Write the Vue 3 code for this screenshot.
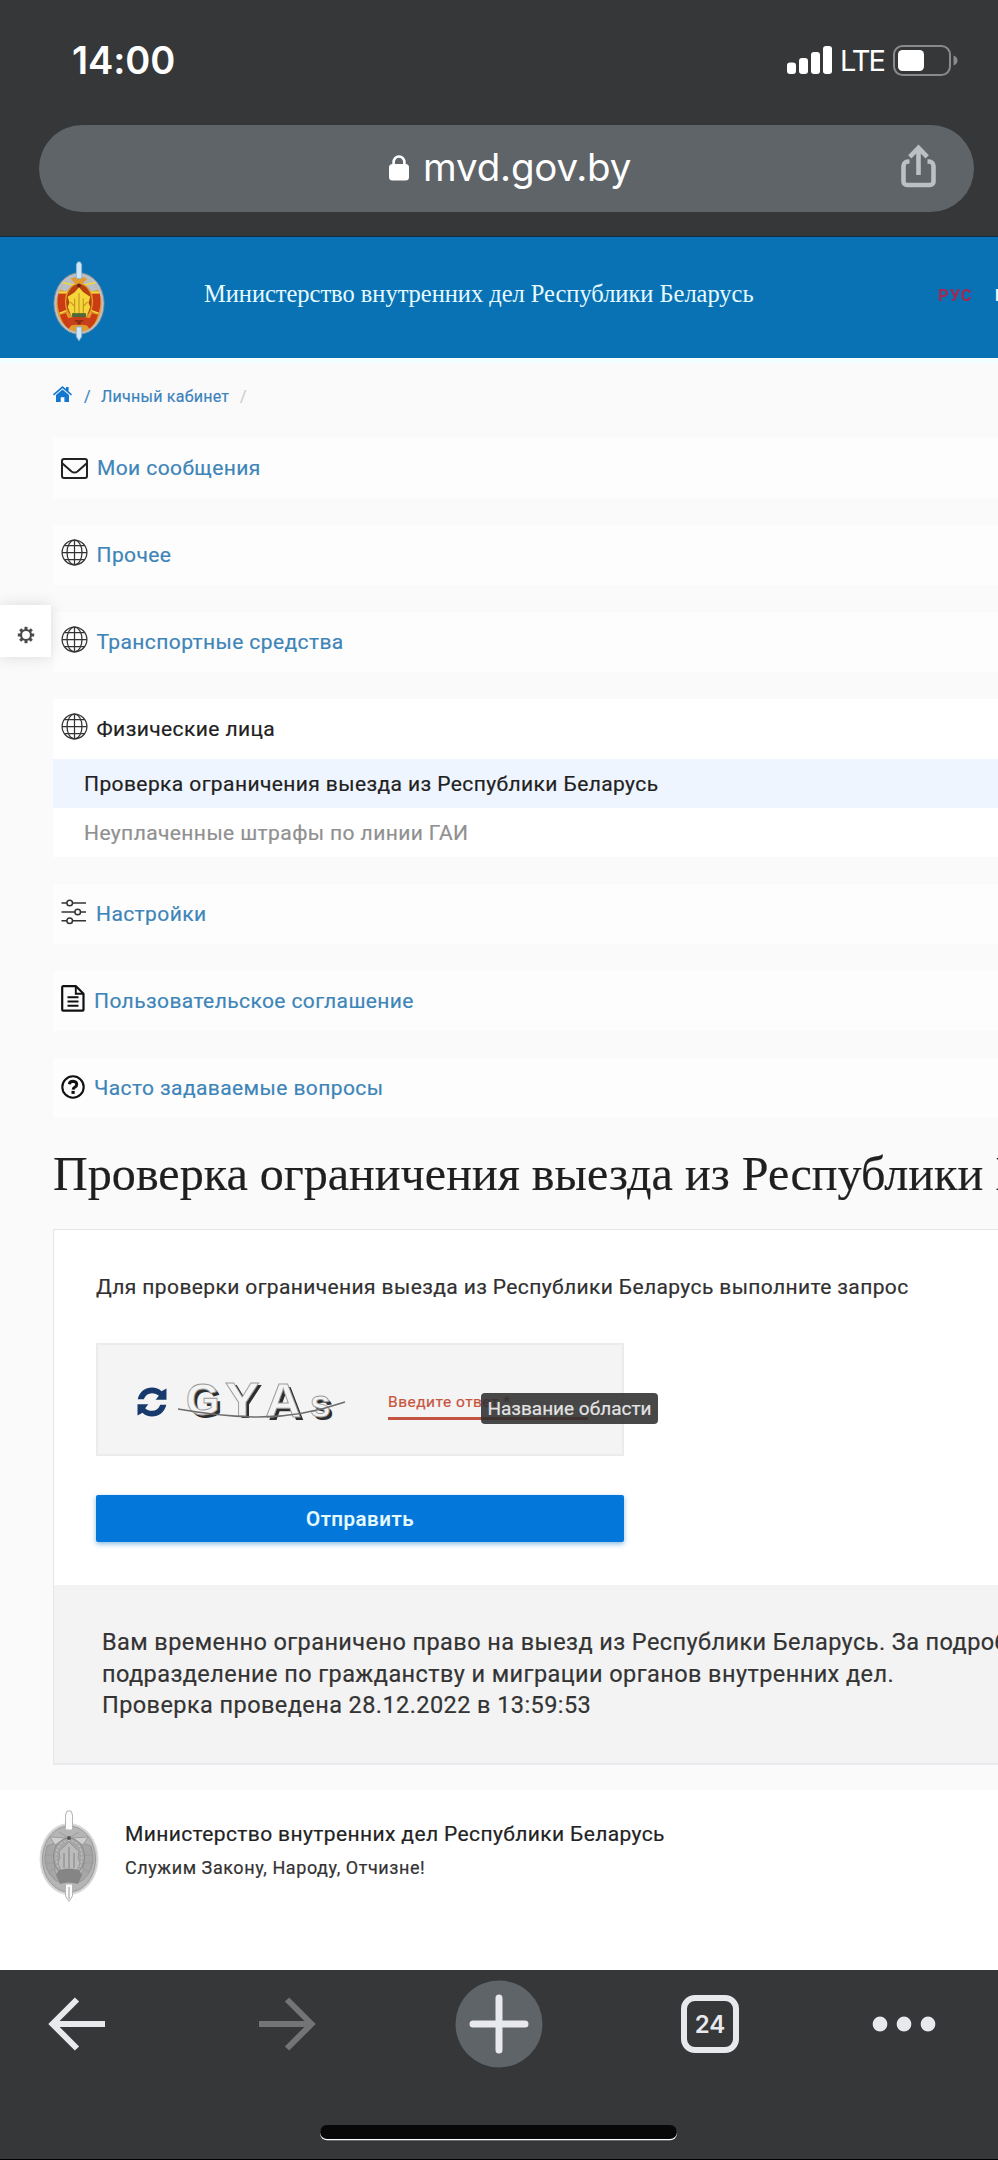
<script setup>
const menuTop = [
  { icon: 'mail', label: 'Мои сообщения' },
  { icon: 'globe', label: 'Прочее' },
  { icon: 'globe', label: 'Транспортные средства' },
  {
    icon: 'globe',
    label: 'Физические лица',
    open: true,
    children: [
      { label: 'Проверка ограничения выезда из Республики Беларусь', active: true },
      { label: 'Неуплаченные штрафы по линии ГАИ' },
    ],
  },
  { icon: 'sliders', label: 'Настройки' },
  { icon: 'doc', label: 'Пользовательское соглашение' },
  { icon: 'help', label: 'Часто задаваемые вопросы' },
]
const gearTeeth = [0, 45, 90, 135, 180, 225, 270, 315]
const emblems = {
  color: { rim: '#b9bfc4', edge: '#7c858c', red: '#cc3c12', gold: '#e39a2e', core: '#b8420f', wheat: '#f4d53a', dark: '#4f6a3a', ribbon: '#c8401c', sword: '#cfe6f7', swordEdge: '#8fb6d3' },
  gray: { rim: '#cfcfcf', edge: '#9a9a9a', red: '#a6a6a6', gold: '#b5b5b5', core: '#a6a6a6', wheat: '#bcbcbc', dark: '#858585', ribbon: '#858585', sword: '#fbfbfb', swordEdge: '#b5b5b5' },
}
</script>

<template>
  <div class="page">
    <header class="chrome-top">
      <div class="status">
        <span class="time">14:00</span>
        <div class="status-right">
          <svg class="signal" width="45" height="28" viewBox="0 0 45 28">
            <rect x="0" y="16.500" width="9" height="11.500" rx="3" fill="#fff" />
            <rect x="12" y="12" width="9" height="16" rx="3" fill="#fff" />
            <rect x="24" y="6" width="9" height="22" rx="3" fill="#fff" />
            <rect x="36" y="0" width="9" height="28" rx="3" fill="#fff" />
          </svg>
          <span class="lte">LTE</span>
          <svg class="battery" width="65" height="31" viewBox="0 0 65 31">
            <rect x="1" y="1" width="56" height="29" rx="8.500" fill="none" stroke="#8a8a8c" stroke-width="2" />
            <rect x="5" y="5" width="26" height="21" rx="4.500" fill="#fff" />
            <path d="M60.500 10.500c3 1 4 2.800 4 5s-1 4-4 5z" fill="#8a8a8c" />
          </svg>
        </div>
      </div>
      <div class="urlbar">
        <svg class="lock" width="20" height="26" viewBox="0 0 20 26">
          <rect x="0" y="9" width="20" height="16.500" rx="3.500" fill="#fff" />
          <path d="M4.600 11V7.300a5.400 5.800 0 0 1 10.800 0V11" fill="none" stroke="#fff" stroke-width="2.600" />
        </svg>
        <span class="url">mvd.gov.by</span>
        <svg class="share" width="36" height="44" viewBox="0 0 36 44">
          <path d="M8.500 17.500H7a4.500 4.500 0 0 0-4.500 4.500v15.500A3.500 3.500 0 0 0 6 41h23a3.500 3.500 0 0 0 3.500-3.500V22a4.500 4.500 0 0 0-4.500-4.500h-1.500" fill="none" stroke="#bcc0c4" stroke-width="4.600" />
          <path d="M17.500 31V4M8.800 12.800L17.500 3.800l8.700 9" fill="none" stroke="#bcc0c4" stroke-width="4.600" />
        </svg>
      </div>
    </header>

    <div class="site-head">
      <svg class="emblem" width="52" height="80" viewBox="0 0 60 92">
        <ellipse cx="30" cy="49" rx="29" ry="35.500" :fill="emblems.color.rim" :stroke="emblems.color.edge" />
        <ellipse cx="30" cy="50" rx="26" ry="32" :fill="emblems.color.gold" />
        <path d="M6 38h10l-1 10 1 11H7Q4 48 6 38zM54 38H44l1 10-1 11h9q3-11 1-21z" :fill="emblems.color.red" />
        <path d="M8 62l7-2 6 14-3 4q-7-5-10-16zM52 62l-7-2-6 14 3 4q7-5 10-16z" :fill="emblems.color.red" />
        <path d="M8 33q4-9 12-13l6 6-10 9zM52 33q-4-9-12-13l-6 6 10 9z" :fill="emblems.color.rim" />
        <path d="M11 25l17 3M49 25l-17 3M7 36h10M53 36H43M8 60l8-3M52 60l-8-3" fill="none" :stroke="emblems.color.wheat" stroke-width="1.800" />
        <ellipse cx="30" cy="47" rx="15.500" ry="21" :fill="emblems.color.core" :stroke="emblems.color.gold" stroke-width="1.500" />
        <path d="M30 30l5 6 8 5-2 7 2 5-4 10H21l-4-10 2-5-2-7 8-5z" :fill="emblems.color.wheat" />
        <path d="M25 60V43M30 60V37M35 60V43M20 47l5 5M40 47l-5 5" fill="none" stroke="#c99a1e" stroke-width="1.400" />
        <path d="M22 60h16v4.500H22z" :fill="emblems.color.dark" />
        <path d="M16 66q14-3 28 0l-1 9q-13-3-26 0z" :fill="emblems.color.ribbon" />
        <path d="M25 69h4v4M31 73v-4h4" fill="none" stroke="#7c2810" stroke-width="1.500" />
        <path d="M27 20V4l1.500-3h3L33 4v16zM27 76h6v11l-3 5-3-5z" :fill="emblems.color.sword" :stroke="emblems.color.swordEdge" />
        <circle cx="30" cy="28" r="2.200" fill="#6b2410" />
      </svg>
      <span class="site-title">Министерство внутренних дел Республики Беларусь</span>
      <span class="lang">РУС</span>
      <span class="lang-next">БЕЛ</span>
    </div>

    <main class="content">
      <nav class="crumbs">
        <svg class="home" width="19" height="16" viewBox="0 0 19 16">
          <path d="M0 8.300L9.500 0l3.500 3V1h2.600v4.200L19 8.300l-1 1.300-8.500-7.300L1 9.600z" fill="#1377cf" />
          <path d="M3 9l6.500-5.600L16 9v7h-4.600v-4.700H7.700V16H3z" fill="#1377cf" />
        </svg>
        <span class="slash">/</span>
        <span class="crumb">Личный кабинет</span>
        <span class="slash pale">/</span>
      </nav>

      <div class="menu">
        <section v-for="(item, i) in menuTop" :key="i" class="card" :class="{ open: item.open }">
          <div class="card-row" :class="item.icon">
            <svg v-if="item.icon === 'mail'" class="ico" width="27" height="21" viewBox="0 0 27 21">
              <rect x="1" y="1" width="25" height="19" rx="2" fill="none" stroke="#222" stroke-width="2" />
              <path d="M1.500 5.500L10.500 13.500q3 2.200 6 0l9-8" fill="none" stroke="#222" stroke-width="2" />
            </svg>
            <svg v-else-if="item.icon === 'globe'" class="ico" width="27" height="27" viewBox="0 0 27 27">
              <g fill="none" stroke="#333" stroke-width="1.250">
                <circle cx="13.500" cy="13.500" r="12.400" />
                <ellipse cx="13.500" cy="13.500" rx="7.500" ry="12.400" />
                <path d="M1 13.500h25M3.500 6.500h20M3.500 20.500h20M13.500 1v25" />
              </g>
            </svg>
            <svg v-else-if="item.icon === 'sliders'" class="ico" width="26" height="26" viewBox="0 0 26 26">
              <g fill="none" stroke="#333" stroke-width="1.500">
                <path d="M.500 4H6M11.500 4H25M.500 13H14M19.500 13H25M.500 21.800H6M11.500 21.800H25" />
                <circle cx="8.700" cy="4" r="2.800" /><circle cx="16.700" cy="13" r="2.800" /><circle cx="8.700" cy="21.800" r="2.800" />
              </g>
            </svg>
            <svg v-else-if="item.icon === 'doc'" class="ico" width="24" height="27" viewBox="0 0 24 27">
              <path d="M1.200 2.200a1 1 0 0 1 1-1H15l7.500 7.500v16a1 1 0 0 1-1 1H2.200a1 1 0 0 1-1-1z" fill="none" stroke="#111" stroke-width="2.200" stroke-linejoin="round" />
              <path d="M14.800 1.500v7.300h7.500M6.500 12.200H17.500M6.500 16.500H17.500M6.500 20.800H17.500" fill="none" stroke="#111" stroke-width="1.900" />
            </svg>
            <svg v-else class="ico" width="24" height="24" viewBox="0 0 24 24">
              <circle cx="12" cy="12" r="10.700" fill="none" stroke="#111" stroke-width="2.100" />
              <path d="M8.300 9.200Q8.800 6.300 12 6.300q3.700.2 3.700 3.100 0 1.500-1.700 2.600-1.800 1-1.900 2.600" fill="none" stroke="#111" stroke-width="3" />
              <rect x="10.500" y="15.900" width="3.200" height="3" fill="#111" />
            </svg>
            <span class="label">{{ item.label }}</span>
          </div>
          <div v-for="c in item.children || []" :key="c.label" class="sub" :class="{ active: c.active }">{{ c.label }}</div>
        </section>
      </div>

      <h1 class="heading">Проверка ограничения выезда из Республики Беларусь</h1>

      <section class="panel">
        <div class="panel-form">
          <p class="intro">Для проверки ограничения выезда из Республики Беларусь выполните запрос</p>
          <div class="captcha">
            <svg class="refresh" width="30" height="30" viewBox="0 0 30 30">
              <g fill="#17396b">
                <path d="M.700 12.200C2.500 4.800 8 .5 15 .5c4 0 7 1.200 9.500 3.700L29.500 1.500v11.300H18.700l3.100-4C20 7 17.700 6.200 15 6.200c-4 0-6.700 2-8.200 6z" />
                <path d="M29.300 17.800C27.500 25.200 22 29.500 15 29.500c-4 0-7-1.200-9.500-3.700L.500 28.500V17.200H11.300l-3.100 4C10 23 12.300 23.800 15 23.800c4 0 6.700-2 8.200-6z" />
              </g>
            </svg>
            <svg class="code" width="180" height="52" viewBox="0 0 180 52">
              <g class="code-shade">
                <text x="13" y="43" font-size="45" textLength="34" lengthAdjust="spacingAndGlyphs">G</text>
                <text x="52" y="43" font-size="49" textLength="35" lengthAdjust="spacingAndGlyphs">Y</text>
                <text x="92" y="45" font-size="48" textLength="37" lengthAdjust="spacingAndGlyphs">A</text>
                <text x="137" y="45" font-size="39" textLength="21" lengthAdjust="spacingAndGlyphs">s</text>
              </g>
              <g class="code-line">
                <text x="10" y="40" font-size="45" textLength="34" lengthAdjust="spacingAndGlyphs">G</text>
                <text x="49" y="41" font-size="49" textLength="35" lengthAdjust="spacingAndGlyphs">Y</text>
                <text x="89" y="42" font-size="48" textLength="37" lengthAdjust="spacingAndGlyphs">A</text>
                <text x="134" y="42" font-size="39" textLength="21" lengthAdjust="spacingAndGlyphs">s</text>
              </g>
              <path d="M2 34q40 7 75 8 46 1 92-15" fill="none" stroke="#6d6d6d" stroke-width="1.600" />
            </svg>
            <div class="answer">Введите ответ *</div>
            <div class="tooltip">Название области</div>
          </div>
          <button class="submit">Отправить</button>
        </div>
        <div class="result">
          <div>Вам временно ограничено право на выезд из Республики Беларусь. За подробной</div>
          <div>подразделение по гражданству и миграции органов внутренних дел.</div>
          <div>Проверка проведена 28.12.2022 в 13:59:53</div>
        </div>
      </section>

      <aside class="gear-tab">
        <svg width="18" height="18" viewBox="-9 -9 18 18">
          <circle r="5" fill="none" stroke="#4a4a4a" stroke-width="2.200" />
          <rect v-for="a in gearTeeth" :key="a" x="-1.500" y="-8.200" width="3" height="3" fill="#4a4a4a" :transform="`rotate(${a})`" />
        </svg>
      </aside>
    </main>

    <footer class="site-foot">
      <svg class="emblem-foot" width="60" height="92" viewBox="0 0 60 92">
        <ellipse cx="30" cy="49" rx="29" ry="35.500" :fill="emblems.gray.rim" stroke="#dedede" />
        <ellipse cx="30" cy="49" rx="26.500" ry="33" :fill="emblems.gray.gold" :stroke="emblems.gray.edge" />
        <path d="M8 36l8-3 2 8-3 8 1 12 6 12-6-3Q5 60 6 46zM52 36l-8-3-2 8 3 8-1 12-6 12 6-3Q55 60 54 46z" :fill="emblems.gray.red" stroke="#8f8f8f" stroke-width=".8" />
        <path d="M11 27l16 1-11 7zM49 27l-16 1 11 7zM7 45h8M6 53h9M53 45h-8M54 53h-9M9 62l8-4M51 62l-8-4M20 22l8 5M40 22l-8 5" :fill="emblems.gray.rim" :stroke="emblems.gray.edge" stroke-width=".9" />
        <ellipse cx="30" cy="47" rx="15.500" ry="19" :fill="emblems.gray.core" stroke="#8a8a8a" />
        <ellipse cx="30" cy="47" rx="13" ry="16.500" fill="none" stroke="#c4c4c4" stroke-width="1.200" stroke-dasharray="2 2" />
        <path d="M30 32l5 5 5 4-1 7 2 5-3 8H22l-3-8 2-5-1-7 5-4z" :fill="emblems.gray.wheat" stroke="#929292" stroke-width=".8" />
        <path d="M25 58V43M30 58V37M35 58V43" fill="none" stroke="#8e8e8e" stroke-width="1.300" />
        <path d="M20 60q10-3 20 0l3 5-4 9q-9-3-18 0l-4-9z" :fill="emblems.gray.ribbon" />
        <path d="M26.500 20V5l1.500-4h4l1.500 4v15zM26.500 74h7v12L30 91.500 26.500 86z" :fill="emblems.gray.sword" :stroke="emblems.gray.swordEdge" />
        <path d="M30 77v12" :stroke="emblems.gray.edge" />
        <circle cx="30" cy="28" r="2" fill="#555" />
      </svg>
      <div class="foot-text">
        <div class="foot-name">Министерство внутренних дел Республики Беларусь</div>
        <div class="foot-motto">Служим Закону, Народу, Отчизне!</div>
      </div>
    </footer>

    <div class="toolbar">
      <div class="tools">
        <svg width="58" height="54" viewBox="0 0 58 54">
          <path d="M57 27H5M29 2.500L4.500 27 29 51.500" fill="none" stroke="#e8e9ed" stroke-width="6" />
        </svg>
        <svg width="58" height="54" viewBox="0 0 58 54">
          <path d="M1 27H53M29 2.500L53.500 27 29 51.500" fill="none" stroke="#737475" stroke-width="6" />
        </svg>
        <svg width="88" height="88" viewBox="0 0 88 88">
          <circle cx="44" cy="44" r="43.500" fill="#5f6468" />
          <path d="M44 18v52M18 44h52" fill="none" stroke="#e8e9ed" stroke-width="7" stroke-linecap="round" />
        </svg>
        <div class="tabs">24</div>
        <svg width="64" height="16" viewBox="0 0 64 16">
          <circle cx="8" cy="8" r="7.400" fill="#e8e9ed" /><circle cx="32" cy="8" r="7.400" fill="#e8e9ed" /><circle cx="56" cy="8" r="7.400" fill="#e8e9ed" />
        </svg>
      </div>
      <div class="home-bar"></div>
    </div>
  </div>
</template>

<style>
body { margin: 0; }
</style>
<style scoped>
.page { width: 998px; height: 2160px; overflow: hidden; background: #fafafa; font-family: Roboto, "Liberation Sans", sans-serif; color: #212121; letter-spacing: .4px; white-space: nowrap; }
.page svg { display: block; flex: none; }
.chrome-top { height: 237px; background: #363739; box-sizing: border-box; border-bottom: 1px solid #0c2c4a; font-family: Inter, sans-serif; color: #fff; letter-spacing: 0; }
.status { height: 120px; display: flex; align-items: center; justify-content: space-between; padding: 0 40px 0 72px; box-sizing: border-box; }
.time { font-size: 38px; font-weight: 600; letter-spacing: -.1px; }
.status-right { display: flex; align-items: center; }
.lte { font-size: 29px; letter-spacing: -1.900px; margin-left: 8px; width: 53px; }
.urlbar { margin: 5px 24px 0 39px; height: 87px; border-radius: 44px; background: #5f6468; display: flex; align-items: center; box-sizing: border-box; padding: 0 37px 0 350px; }
.lock { margin-top: -2px; }
.url { font-size: 38.500px; letter-spacing: -.2px; margin-left: 14px; margin-top: -3px; }
.share { margin-left: auto; margin-top: -6px; }

.site-head { height: 121px; background: #0872b4; display: flex; align-items: center; padding-left: 53px; position: relative; box-shadow: 0 5px 0 #f3ffff; }
.emblem { margin-top: 7px; }
.site-title { font: 24.500px "Liberation Serif", serif; letter-spacing: -.03px; color: #e6faff; margin: 0 0 8px 99px; width: 734px; flex: none; }
.lang { font-size: 16.500px; font-weight: 700; letter-spacing: 1px; color: #a52850; margin-bottom: 5px; width: 57px; filter: blur(.5px); flex: none; }
.lang-next { font-size: 17px; font-weight: 700; color: #fff; margin-bottom: 5px; }

.content { position: relative; height: 1432px; display: flex; flex-direction: column; }
.content, .site-foot { -webkit-text-stroke: .2px currentColor; }
.crumbs { height: 77px; margin-bottom: 3px; padding-left: 53px; display: flex; align-items: center; color: #3a83bd; font-size: 16px; letter-spacing: .25px; }
.slash { margin-left: 12px; width: 17px; }
.crumb { width: 127px; }
.slash.pale { margin-left: 12px; color: #ccc; }
.home { margin-top: -5px; }

.menu { display: flex; flex-direction: column; gap: 27px; margin-left: 53px; }
.card { background: #fdfdfd; }
.card.open { background: #fff; }
.card-row { height: 60px; display: flex; align-items: center; padding-left: 8px; font-size: 21px; color: #3d85b8; }
.open .card-row { color: #212121; }
.ico { margin-top: -6px; }
.label { margin-left: 8.500px; }
.mail .label { margin-left: 9px; }
.mail .ico { margin-top: 0; }
.sliders .ico { margin-top: -5px; }
.sliders .label { margin-left: 9px; }
.doc .label, .help .label { margin-left: 9px; }
.doc .ico { margin-top: -5px; }
.help .ico { margin-top: -3px; }
.sub { height: 49px; line-height: 50px; padding-left: 31px; font-size: 21px; color: #909090; }
.sub.active { background: #eef5fe; color: #212121; }

.heading { margin: 0; height: 111px; line-height: 112px; padding-left: 53px; font-family: "Liberation Serif", serif; font-size: 48.100px; font-weight: 400; letter-spacing: .02px; color: #1f1f1f; }

.panel { margin-left: 53px; border: 1px solid #e6e6e8; border-right: 0; border-bottom: 2px solid #e8e9ec; box-sizing: border-box; height: 536px; background: #fff; }
.panel-form { height: 355px; padding-left: 42px; }
.intro { margin: 0; height: 113px; line-height: 115px; font-size: 21px; letter-spacing: .38px; color: #303030; }
.captcha { position: relative; width: 528px; height: 113px; box-sizing: border-box; background: #f4f4f4; border: 2px solid #ebebeb; display: flex; align-items: center; padding-left: 39px; }
.refresh { margin-top: 5px; }
.code { margin-left: 9px; margin-top: 2px; overflow: visible; }
.code text { font-family: "Liberation Sans", sans-serif; font-weight: 700; }
.code-shade text { fill: #2e2e2e; stroke: none; }
.code-line text { fill: #f4f4f4; stroke: #9a9a9a; stroke-width: .9px; }
.answer { margin-left: 32px; margin-top: 8px; width: 200px; height: 33px; line-height: 31px; box-sizing: border-box; border-bottom: 3px solid #c2553f; font-size: 15.500px; letter-spacing: .5px; color: #c8553f; }
.tooltip { position: absolute; left: 383px; top: 48px; width: 177px; height: 31px; border-radius: 4px; background: rgba(45, 45, 45, .87); color: #e4e4e4; text-align: center; font-size: 19px; line-height: 31px; letter-spacing: 0; }
.submit { display: block; width: 528px; height: 47px; margin: 39px 0 0; padding: 0; border: 0; border-radius: 2px; background: #0477da; color: #e6fbff; font-family: Roboto, sans-serif; font-weight: 500; font-size: 20.500px; line-height: 46px; letter-spacing: .5px; box-shadow: 0 2px 5px rgba(20, 120, 200, .5); }
.result { background: #f3f3f3; height: 178px; box-sizing: border-box; padding: 42px 0 0 48px; font-size: 23.500px; line-height: 31.700px; letter-spacing: .42px; color: #333; overflow: hidden; }

.gear-tab { position: absolute; left: 0; top: 247px; width: 51px; height: 52px; background: #fff; box-shadow: 0 0 14px rgba(0, 0, 0, .13); display: flex; align-items: center; justify-content: center; }
.gear-tab svg { margin-top: 7px; margin-left: 1px; }

.site-foot { height: 180px; background: #fff; display: flex; padding-left: 39px; box-sizing: border-box; }
.emblem-foot { margin-top: 20px; }
.foot-text { margin: 27px 0 0 26px; }
.foot-name { font-size: 21px; line-height: 34px; letter-spacing: .38px; color: #222; }
.foot-motto { font-size: 18px; line-height: 34px; letter-spacing: .57px; color: #333; }

.toolbar { height: 190px; box-sizing: border-box; background: #363739; border-bottom: 1px solid #000; letter-spacing: 0; }
.tools { height: 108px; display: flex; align-items: center; padding-left: 48px; }
.tools > :nth-child(2) { margin-left: 152px; }
.tools > :nth-child(3) { margin-left: 139px; }
.tools > :nth-child(5) { margin-left: 133px; }
.tabs { margin-left: 138px; width: 58px; height: 58px; box-sizing: border-box; border: 6.500px solid #e8e9ed; border-radius: 14px; font: 600 24px/47px Inter, sans-serif; color: #e8e9ed; text-align: center; }
.home-bar { margin: 47px 0 0 320px; width: 357px; height: 14px; border-radius: 7px; background: #080808; box-shadow: 0 1.200px 0 #fff; }
</style>
